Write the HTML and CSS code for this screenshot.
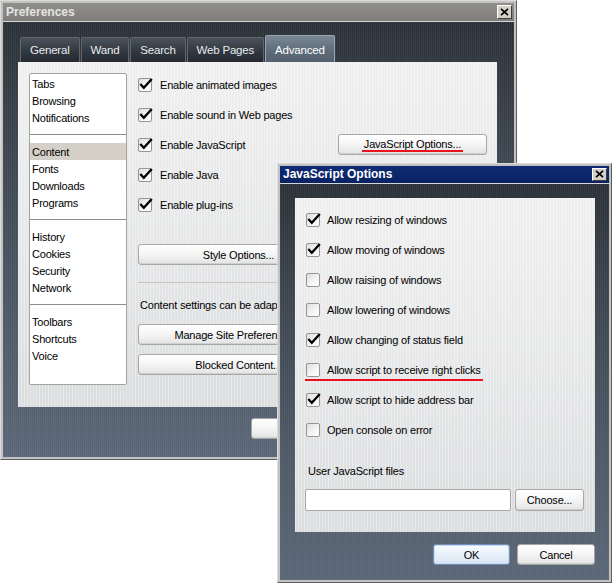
FILE: index.html
```html
<!DOCTYPE html>
<html>
<head>
<meta charset="utf-8">
<link rel="stylesheet" href="styles.css">
</head>
<body>
<div class="desk">

  <div class="win prefs">
    <div class="titlebar">
      <span>Preferences</span>
      <span class="close"><svg width="9" height="8" viewBox="0 0 9 8"><path d="M1 0.8 L8 7.2 M8 0.8 L1 7.2" stroke="#000" stroke-width="1.7" fill="none"/></svg></span>
    </div>
    <div class="dark prefs-body">
      <div class="tabs">
        <div class="tab">General</div>
        <div class="tab">Wand</div>
        <div class="tab">Search</div>
        <div class="tab">Web Pages</div>
        <div class="tab active">Advanced</div>
      </div>
      <div class="panel">
        <div class="list">
          <div class="item">Tabs</div>
          <div class="item">Browsing</div>
          <div class="item">Notifications</div>
          <div class="sep"></div>
          <div class="item sel">Content</div>
          <div class="item">Fonts</div>
          <div class="item">Downloads</div>
          <div class="item">Programs</div>
          <div class="sep"></div>
          <div class="item">History</div>
          <div class="item">Cookies</div>
          <div class="item">Security</div>
          <div class="item">Network</div>
          <div class="sep"></div>
          <div class="item">Toolbars</div>
          <div class="item">Shortcuts</div>
          <div class="item">Voice</div>
        </div>
        <div class="content">
          <div class="row"><span class="cb"><svg class="ck" viewBox="0 0 16 15"><path d="M2.3 6 L5.8 9.8 L13.8 1" /></svg></span><span>Enable animated images</span></div>
          <div class="row"><span class="cb"><svg class="ck" viewBox="0 0 16 15"><path d="M2.3 6 L5.8 9.8 L13.8 1" /></svg></span><span>Enable sound in Web pages</span></div>
          <div class="row"><span class="cb"><svg class="ck" viewBox="0 0 16 15"><path d="M2.3 6 L5.8 9.8 L13.8 1" /></svg></span><span>Enable JavaScript</span>
            <div class="btn btn-js"><span class="mark">JavaScript Options...</span></div>
          </div>
          <div class="row"><span class="cb"><svg class="ck" viewBox="0 0 16 15"><path d="M2.3 6 L5.8 9.8 L13.8 1" /></svg></span><span>Enable Java</span></div>
          <div class="row"><span class="cb"><svg class="ck" viewBox="0 0 16 15"><path d="M2.3 6 L5.8 9.8 L13.8 1" /></svg></span><span>Enable plug-ins</span></div>
          <div class="btn btn-wide btn-style">Style Options...</div>
          <div class="hr"></div>
          <div class="note">Content settings can be adapted to each site</div>
          <div class="btn btn-wide btn-manage">Manage Site Preferences...</div>
          <div class="btn btn-wide btn-blocked">Blocked Content...</div>
        </div>
      </div>
      <div class="actions prefs-actions">
        <div class="btn btn-dlg">OK</div>
        <div class="btn btn-dlg">Cancel</div>
        <div class="btn btn-dlg">Help</div>
      </div>
    </div>
  </div>

  <div class="win jsopt">
    <div class="titlebar">
      <span>JavaScript Options</span>
      <span class="close small"><svg width="9" height="8" viewBox="0 0 9 8"><path d="M1 0.8 L8 7.2 M8 0.8 L1 7.2" stroke="#000" stroke-width="1.7" fill="none"/></svg></span>
    </div>
    <div class="dark js-body">
      <div class="panel js-panel">
        <div class="row"><span class="cb"><svg class="ck" viewBox="0 0 16 15"><path d="M2.3 6 L5.8 9.8 L13.8 1" /></svg></span><span>Allow resizing of windows</span></div>
        <div class="row"><span class="cb"><svg class="ck" viewBox="0 0 16 15"><path d="M2.3 6 L5.8 9.8 L13.8 1" /></svg></span><span>Allow moving of windows</span></div>
        <div class="row"><span class="cb"></span><span>Allow raising of windows</span></div>
        <div class="row"><span class="cb"></span><span>Allow lowering of windows</span></div>
        <div class="row"><span class="cb"><svg class="ck" viewBox="0 0 16 15"><path d="M2.3 6 L5.8 9.8 L13.8 1" /></svg></span><span>Allow changing of status field</span></div>
        <div class="row marked"><span class="cb"></span><span>Allow script to receive right clicks</span></div>
        <div class="row"><span class="cb"><svg class="ck" viewBox="0 0 16 15"><path d="M2.3 6 L5.8 9.8 L13.8 1" /></svg></span><span>Allow script to hide address bar</span></div>
        <div class="row"><span class="cb"></span><span>Open console on error</span></div>
        <div class="label">User JavaScript files</div>
        <div class="filerow">
          <div class="input"></div>
          <div class="btn btn-choose">Choose...</div>
        </div>
      </div>
      <div class="actions js-actions">
        <div class="btn btn-ok">OK</div>
        <div class="btn btn-cancel">Cancel</div>
      </div>
    </div>
  </div>

</div>
</body>
</html>
```

FILE: styles.css
```css
* { box-sizing: border-box; }

body {
  margin: 0;
  background: #fff;
  font-family: "Liberation Sans", Arial, sans-serif;
  font-size: 11px;
  letter-spacing: -0.2px;
  color: #000;
}

.desk {
  position: relative;
  width: 613px;
  height: 585px;
  overflow: hidden;
}

.win {
  position: absolute;
  display: flex;
  flex-direction: column;
  border: 1px solid;
  border-color: #dcdcdc #5e5e5e #5e5e5e #dcdcdc;
  padding: 2px;
  background: #c2c2c2;
}

.prefs { left: 0; top: 0; width: 517px; height: 460px; }
.jsopt { left: 277px; top: 163px; width: 335px; height: 420px; }

.titlebar {
  display: flex;
  align-items: center;
  justify-content: space-between;
  height: 19px;
  padding: 0 2px 1px 3px;
  font-weight: bold;
  font-size: 12px;
  letter-spacing: 0;
  border-bottom: 1px solid #d6d6d6;
  flex: none;
}

.prefs .titlebar {
  background: linear-gradient(#908e8b, #807e7b);
  color: #e4e4e4;
}

.jsopt .titlebar {
  height: 18px;
  background: linear-gradient(#0e2c74, #0a2262);
  color: #fff;
}

.close {
  width: 15px;
  height: 14px;
  background: #d4d0c8;
  border: 1px solid;
  border-color: #ffffff #404040 #404040 #ffffff;
  display: flex;
  align-items: center;
  justify-content: center;
}

.close.small { width: 15px; height: 13px; }

.dark {
  flex: 1;
  display: flex;
  flex-direction: column;
  background:
    repeating-linear-gradient(90deg, rgba(255,255,255,0.045) 0 1px, rgba(0,0,0,0) 1px 2px),
    linear-gradient(#2b3138, #3d4650 30%, #4f5a67 70%, #5a6676);
}

/* ---------- Preferences ---------- */
.prefs-body { padding: 14px 0 0 15px; }

.tabs {
  display: flex;
  align-items: flex-end;
  height: 26px;
  margin-left: 2px;
}

.tab {
  height: 25px;
  padding: 0 9px;
  margin-right: 1px;
  display: flex;
  align-items: center;
  color: #e6eaee;
  font-size: 11.5px;
  background: linear-gradient(#4a525b, #30363d 60%, #262b31);
  border: 1px solid #5f666e;
  border-bottom: none;
  border-radius: 2px 2px 0 0;
}

.tab.active {
  height: 27px;
  padding-top: 2px;
  background: linear-gradient(#7a8896, #5d6b79 60%, #536170);
  border-color: #99a4af;
  color: #fff;
}

.panel {
  display: flex;
  background:
    repeating-linear-gradient(90deg, rgba(255,255,255,0.35) 0 1px, rgba(0,0,0,0) 1px 3px),
    linear-gradient(#efefef, #e6e7e8 50%, #dadcde);
}

.prefs .panel {
  width: 479px;
  height: 345px;
  padding: 11px 10px 0 11px;
  gap: 11px;
  margin-left: 0;
}

.list {
  width: 98px;
  height: 312px;
  background: #fff;
  border: 1px solid #a3a3a3;
  border-radius: 2px;
  padding-top: 1px;
  flex: none;
}

.item {
  height: 17px;
  line-height: 19px;
  padding-left: 2px;
}

.item.sel { background: #d4d0c8; }

.sep {
  height: 1px;
  background: #8e8e8e;
  margin: 8px 0;
}

.content {
  flex: 1;
  display: flex;
  flex-direction: column;
  align-items: flex-start;
  padding-top: 3px;
}

.row {
  display: flex;
  align-items: center;
  height: 17px;
  gap: 8px;
  margin-bottom: 13px;
  align-self: stretch;
  position: relative;
}

.cb {
  position: relative;
  width: 14px;
  height: 14px;
  flex: none;
  border: 1px solid #969696;
  border-radius: 2px;
  background: linear-gradient(135deg, #dedede, #f6f6f6 60%, #ffffff);
}

.ck {
  position: absolute;
  left: -1px;
  top: -1px;
  width: 16px;
  height: 15px;
  overflow: visible;
}

.ck path {
  fill: none;
  stroke: #000;
  stroke-width: 2.3;
  stroke-linejoin: miter;
}

.btn {
  height: 21px;
  display: flex;
  align-items: center;
  justify-content: center;
  border: 1px solid #a6a6a6;
  border-radius: 3px;
  background: linear-gradient(#ffffff, #f6f6f6 45%, #e3e3e3);
  box-shadow: inset 0 -1px 0 #d0d0d0;
  flex: none;
}

.btn-js {
  margin-left: auto;
  width: 149px;
  padding-bottom: 2px;
}

.mark { position: relative; }

.mark::after {
  content: "";
  position: absolute;
  left: -2px;
  right: -2px;
  bottom: -2px;
  height: 2px;
  background: #e8131b;
}

.btn-wide { width: 201px; }
.btn-style { margin-top: 18px; }

.hr {
  align-self: stretch;
  height: 1px;
  background: #c6c6c6;
  margin-top: 17px;
}

.note {
  margin-top: 15px;
  line-height: 14px;
  white-space: nowrap;
  padding-left: 2px;
}

.btn-manage { margin-top: 12px; }
.btn-blocked { margin-top: 9px; }

.actions {
  display: flex;
  justify-content: flex-end;
}

.prefs-actions {
  margin-top: 11px;
  gap: 8px;
  padding-right: 19px;
}

.btn-dlg { width: 76px; }

/* ---------- JavaScript Options ---------- */
.js-body { padding: 14px 14px 0 15px; }

.js-panel {
  width: 300px;
  height: 334px;
  flex-direction: column;
  padding: 13px 11px 0 11px;
}

.js-panel .row { gap: 7px; }

.marked::after {
  content: "";
  position: absolute;
  left: -1px;
  width: 178px;
  bottom: -3px;
  height: 2px;
  background: #e8131b;
}

.label {
  margin-top: 13px;
  line-height: 14px;
  padding-left: 2px;
}

.filerow {
  display: flex;
  gap: 4px;
  margin-top: 11px;
  margin-left: -1px;
}

.input {
  width: 206px;
  height: 22px;
  background: #fff;
  border: 1px solid #a9a9a9;
  border-radius: 2px;
}

.btn-choose { width: 69px; height: 22px; }

.js-actions {
  margin-top: 12px;
  gap: 7px;
}

.btn-ok {
  width: 77px;
  border-color: #6f8fb6;
  background: linear-gradient(#f8fbff, #e9f1fa 50%, #d9e5f2);
  box-shadow: inset 0 0 0 1px #c8dbf0;
}

.btn-cancel { width: 78px; }
```
